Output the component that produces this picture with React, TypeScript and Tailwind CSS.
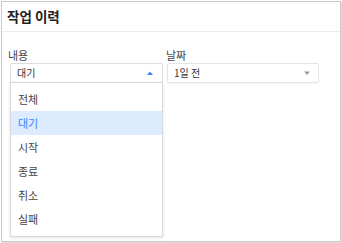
import React from "react";

const font = { fontFamily: '"Noto Sans CJK KR", "Noto Sans", sans-serif' };

export default function App() {
  const items = ["전체", "대기", "시작", "종료", "취소", "실패"];
  return (
    <div className="w-[342px] h-[243px] bg-white pl-[1px] pt-[1px]" style={font}>
      <div className="w-[340px] h-[241px] border border-[#c9c9c9] shadow-[1px_1px_0_#dcdcdc] bg-white flex flex-col">
        <div className="h-[30px] border-b border-[#ececec] flex items-center pl-[5px]">
          <span className="text-[13.5px] font-bold text-[#222] leading-none">작업 이력</span>
        </div>
        <div className="flex pt-[15px] pl-[6px] gap-[2px]">
          <div className="flex flex-col w-[156px]">
            <span className="text-[11px] text-[#444] leading-[16px] h-[16px]">내용</span>
            <div className="relative ml-[2px]">
              <div className="h-[20px] w-[153px] border border-[#dedede] rounded-[2px] flex items-center justify-between pl-[6px] pr-[9px] shadow-[0_1px_1px_rgba(0,0,0,0.04)]">
                <span className="text-[10px] text-[#333] leading-none">대기</span>
                <svg width="6" height="4" viewBox="0 0 6 4"><path d="M0 4 L3 0.5 L6 4 Z" fill="#3b82f6" /></svg>
              </div>
              <div className="absolute left-0 top-[19px] w-[153px] h-[155px] bg-white border border-[#dadada] shadow-[0_1px_3px_rgba(0,0,0,0.12)] pt-[4px] z-10">
                {items.map((it) => (
                  <div
                    key={it}
                    className={
                      it === "대기"
                        ? "h-[24px] flex items-center pl-[7px] bg-[#dcebfd] text-[#3b86f5] text-[11px]"
                        : "h-[24px] flex items-center pl-[7px] text-[#444] text-[11px]"
                    }
                  >
                    {it}
                  </div>
                ))}
              </div>
            </div>
          </div>
          <div className="flex flex-col w-[156px]">
            <span className="text-[11px] text-[#444] leading-[16px] h-[16px]">날짜</span>
            <div className="ml-[1px]">
              <div className="h-[20px] w-[152px] border border-[#e4e4e4] rounded-[2px] flex items-center justify-between pl-[6px] pr-[8px] shadow-[0_1px_1px_rgba(0,0,0,0.04)]">
                <span className="text-[10px] text-[#333] leading-none">1일 전</span>
                <svg width="6" height="4" viewBox="0 0 6 4"><path d="M0 0.5 L3 4 L6 0.5 Z" fill="#999" /></svg>
              </div>
            </div>
          </div>
        </div>
      </div>
    </div>
  );
}
